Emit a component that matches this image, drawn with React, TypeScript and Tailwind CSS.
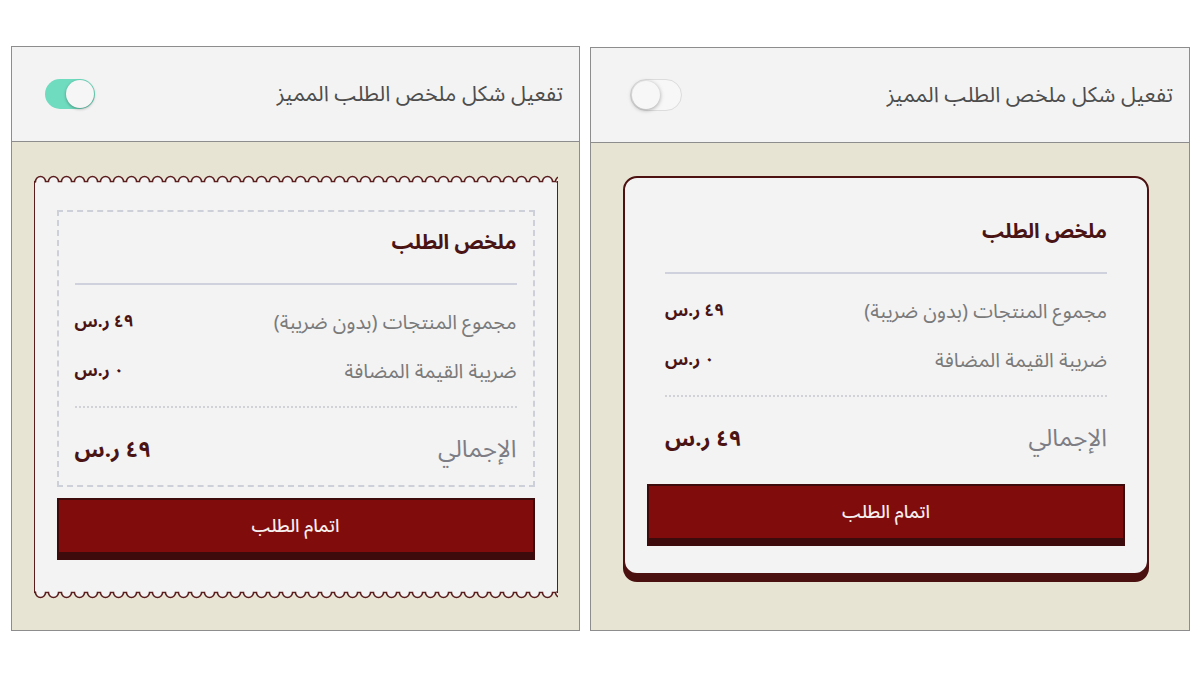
import React from "react";

const FONT = { fontFamily: '"Noto Sans Arabic", "Noto Sans", "DejaVu Sans", sans-serif' };

function Toggle({ on }: { on: boolean }) {
  if (on) {
    return (
      <div dir="ltr" className="w-[50px] h-[30px] rounded-full bg-[#6fdcbf] flex items-center justify-end pr-[1px]">
        <div className="w-[28px] h-[28px] rounded-full bg-[#f6f6f6] shadow-[0_1px_3px_rgba(0,0,0,0.35)]" />
      </div>
    );
  }
  return (
    <div dir="ltr" className="w-[52px] h-[32px] rounded-full bg-[#f7f7f7] border border-[#dcdcdc] flex items-center justify-start pl-[1px]">
      <div className="w-[28px] h-[28px] rounded-full bg-[#f7f7f7] shadow-[0_1px_4px_rgba(0,0,0,0.35)]" />
    </div>
  );
}

function Header({ on, pl }: { on: boolean; pl: string }) {
  return (
    <div className={"h-[95px] bg-[#f3f3f3] border-b border-[#8d8d8d] flex items-center justify-between pr-[16px] " + pl}>
      <span className="text-[21.5px] text-[#4d4d4d]">تفعيل شكل ملخص الطلب المميز</span>
      <Toggle on={on} />
    </div>
  );
}

function Summary({ dashed }: { dashed: boolean }) {
  return (
    <div
      className={
        "px-[16px] pt-[18px] pb-[15px] border-2 " +
        (dashed ? "border-dashed border-[#cdd0d8]" : "border-transparent")
      }
    >
      <div className="h-[26px] leading-[26px] text-[20.5px] font-bold text-[#4a1414]">ملخص الطلب</div>
      <div className="mt-[27px] h-[2px] bg-[#cfd1dc]" />
      <div className="mt-[13px] h-[49px] flex items-center justify-between">
        <span className="text-[20px] text-[#7a7a7a]">مجموع المنتجات (بدون ضريبة)</span>
        <span className="text-[17px] font-bold text-[#4a1414]">٤٩ ر.س</span>
      </div>
      <div className="h-[49px] flex items-center justify-between">
        <span className="text-[20px] text-[#7a7a7a]">ضريبة القيمة المضافة</span>
        <span className="text-[17px] font-bold text-[#4a1414]">٠ ر.س</span>
      </div>
      <div className="mt-[10px] border-t-2 border-dotted border-[#d0d2d8]" />
      <div className="mt-[22px] h-[40px] flex items-center justify-between">
        <span className="text-[24px] text-[#7d7d85]">الإجمالي</span>
        <span className="text-[22px] font-bold text-[#4a1414]">٤٩ ر.س</span>
      </div>
    </div>
  );
}

function OrderButton({ mt }: { mt: string }) {
  return (
    <div
      className={
        mt +
        " h-[62px] bg-[#800c0c] border-2 border-b-[8px] border-[#3d0b0b] flex items-center justify-center text-[18px] font-medium text-[#f5eeee]"
      }
    >
      اتمام الطلب
    </div>
  );
}

function Scallop({ flip }: { flip?: boolean }) {
  const id = flip ? "scb" : "sct";
  return (
    <svg className={"block w-full h-[8px] " + (flip ? "scale-y-[-1]" : "")}>
      <defs>
        <pattern id={id} x="0" y="0" width="13" height="8" patternUnits="userSpaceOnUse">
          <path d="M0 8 L0 6.5 L1.5 6.5 A5 5 0 0 1 11.5 6.5 L13 6.5 L13 8 Z" fill="#f3f3f3" />
          <path d="M0 6.5 L1.5 6.5 A5 5 0 0 1 11.5 6.5 L13 6.5" fill="none" stroke="#5a1c1c" strokeWidth="1.5" />
        </pattern>
      </defs>
      <rect x="0" y="0" width="100%" height="8" fill={`url(#${id})`} />
      <line x1="0.75" y1="6" x2="0.75" y2="8" stroke="#5a1c1c" strokeWidth="1.5" />
      <line x1="100%" y1="6" x2="100%" y2="8" stroke="#5a1c1c" strokeWidth="3" />
    </svg>
  );
}

export default function App() {
  return (
    <div dir="rtl" style={FONT} className="w-[1200px] h-[675px] bg-white flex flex-row-reverse items-start pt-[46px] pl-[11px] gap-[10px]">
      {/* left panel (on) */}
      <div className="w-[569px] h-[585px] border border-[#8d8d8d] flex flex-col">
        <Header on={true} pl="pl-[33px]" />
        <div className="flex-1 bg-[#e7e4d4] pt-[33px] flex justify-center">
          <div className="w-[524px] h-fit flex flex-col">
            <Scallop />
            <div className="bg-[#f3f3f3] border-x-[1.5px] border-[#5a1c1c] px-[22px] pt-[27px] pb-[31px]">
              <Summary dashed={true} />
              <OrderButton mt="mt-[11px]" />
            </div>
            <Scallop flip />
          </div>
        </div>
      </div>
      {/* right panel (off) */}
      <div className="w-[600px] h-[584px] mt-[1px] border border-[#8d8d8d] flex flex-col">
        <Header on={false} pl="pl-[39px]" />
        <div className="flex-1 bg-[#e7e4d4] pt-[33px] pr-[40px]">
          <div className="w-[526px] bg-[#f3f3f3] border-2 border-[#4d1111] rounded-[14px] shadow-[0_7px_0_#4a0f0f] px-[22px] pt-[21px] pb-[27px]">
            <Summary dashed={false} />
            <OrderButton mt="mt-[8px]" />
          </div>
        </div>
      </div>
    </div>
  );
}
